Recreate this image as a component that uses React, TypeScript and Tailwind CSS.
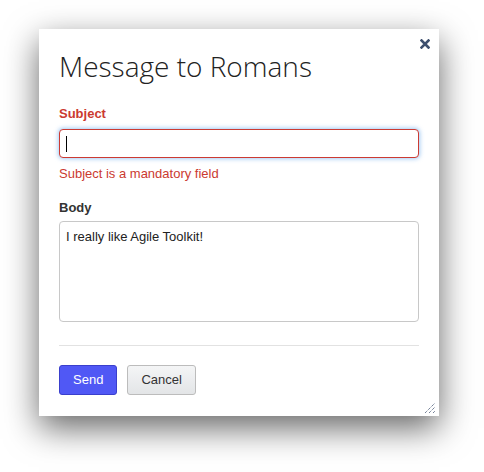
export default function App() {
  return (
    <div className="min-h-screen bg-white pt-[29px] pl-[39px] font-['Liberation_Sans',Arial,sans-serif]">
      <div className="relative w-[400px] h-[387px] bg-white shadow-[0_12px_32px_rgba(0,0,0,0.6)] px-5 pt-5">
        {/* close */}
        <button className="absolute right-[9px] top-[9px] w-[11px] h-[11px] flex items-center justify-center">
          <svg viewBox="0 0 10 10" className="w-[10px] h-[10px]">
            <path d="M1.5 1.5 L8.5 8.5 M8.5 1.5 L1.5 8.5" stroke="#3d4f6e" strokeWidth="2.6" strokeLinecap="square" />
          </svg>
        </button>

        <h1 className="font-['Open_Sans',sans-serif] font-light text-[28px] leading-[34px] text-[#222]">
          Message to Romans
        </h1>

        <div className="mt-[22px] text-[13px] leading-[18px] font-bold text-[#cb3a30]">Subject</div>
        <div className="mt-[6px] h-[29px] w-[360px] rounded-[4px] border border-[#cc3b33] bg-white shadow-[0_0_4px_1px_rgba(90,160,235,0.55)] flex items-center pl-[6px]">
          <span className="block w-px h-[16px] bg-black" />
        </div>
        <div className="mt-[7px] text-[13px] leading-[18px] text-[#cb3a30]">Subject is a mandatory field</div>

        <div className="mt-[16px] text-[13px] leading-[18px] font-bold text-[#333]">Body</div>
        <textarea
          defaultValue="I really like Agile Toolkit!"
          className="mt-[4px] block w-[360px] h-[101px] resize-none rounded-[4px] border border-[#c8c8c8] px-[6px] pt-[6px] text-[13px] leading-[18px] text-[#222] outline-none font-['Liberation_Sans',Arial,sans-serif]"
        />

        <div className="mt-[23px] h-px w-[360px] bg-[#e2e2e2]" />

        <div className="mt-[19px] flex gap-[10px]">
          <button className="h-[30px] px-[13px] rounded-[3px] border border-[#3a3fcc] bg-[#5058f5] text-white text-[13px]">
            Send
          </button>
          <button className="h-[30px] px-[13px] rounded-[3px] border border-[#bcbcbc] bg-gradient-to-b from-[#f4f5f6] to-[#e3e5e7] text-[#333] text-[13px]">
            Cancel
          </button>
        </div>

        {/* resize grip */}
        <svg viewBox="0 0 12 12" className="absolute right-[3px] bottom-[2px] w-[12px] h-[12px]">
          <path d="M1 11 L11 1 M5 11 L11 5 M9 11 L11 9" stroke="#3d4f6e" strokeWidth="1" strokeDasharray="1 1" />
        </svg>
      </div>
    </div>
  )
}
